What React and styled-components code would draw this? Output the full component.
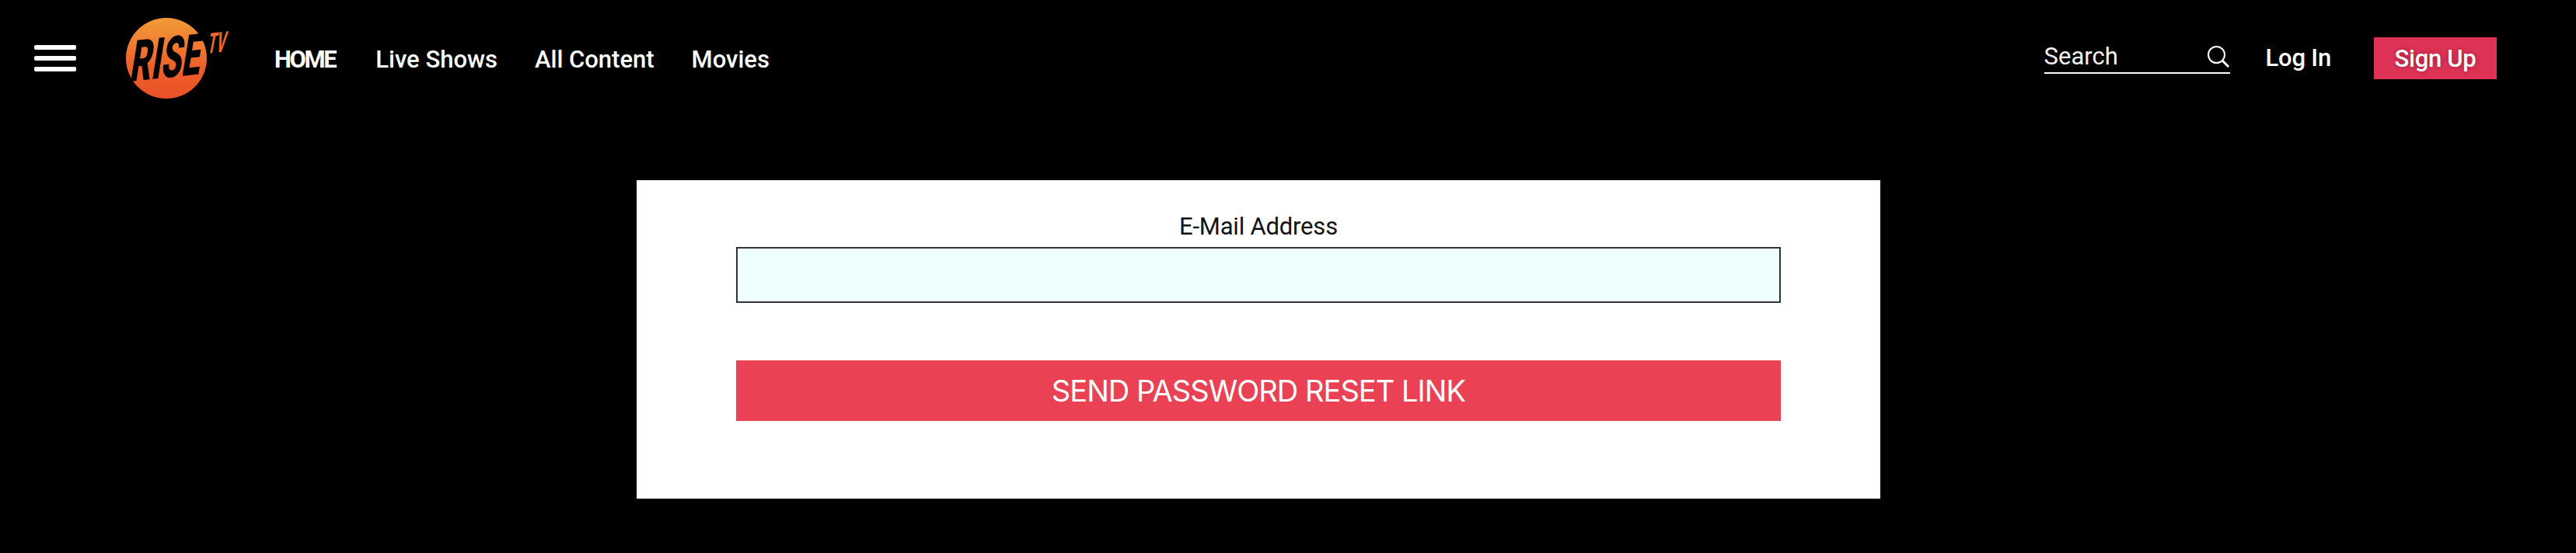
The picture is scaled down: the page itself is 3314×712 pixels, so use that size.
import React from "react";
import styled, { createGlobalStyle } from "styled-components";

const GlobalStyle = createGlobalStyle`
  html, body {
    margin: 0;
    background: #000;
  }
  body {
    font-family: Roboto, "Liberation Sans", sans-serif;
    color: #fff;
  }
`;

const Page = styled.div`
  width: 3314px;
  height: 712px;
  background: #000;
  overflow: hidden;
`;

const Header = styled.header`
  height: 150px;
  box-sizing: border-box;
  padding: 0 102px 0 44px;
  display: flex;
  align-items: center;
`;

const Burger = styled.button`
  width: 54px;
  padding: 0;
  border: 0;
  background: none;
  display: flex;
  flex-direction: column;
  gap: 8px;
  margin-right: 64px;
`;

const BurgerBar = styled.span`
  height: 6px;
  border-radius: 2px;
  background: #fff;
`;

const LogoSvg = styled.svg`
  width: 142px;
  height: 110px;
  margin-right: 49px;
  flex: none;
`;

const Nav = styled.nav`
  display: flex;
  align-items: center;
  gap: 48px;
  padding-top: 3px;
`;

const NavLink = styled.a`
  font-size: 31px;
  line-height: 40px;
  font-weight: ${(props) => (props.$active ? 700 : 500)};
  letter-spacing: ${(props) => (props.$active ? "-2.4px" : "0")};
  margin-right: ${(props) => (props.$active ? "4px" : "0")};
  color: #fff;
  white-space: nowrap;
`;

const RightSide = styled.div`
  margin-left: auto;
  display: flex;
  align-items: center;
`;

const SearchBox = styled.div`
  width: 239px;
  height: 40px;
  border-bottom: 2px solid #fff;
  display: flex;
  align-items: center;
  justify-content: space-between;
  margin: 0 46px 2px 0;
`;

const SearchLabel = styled.span`
  font-size: 31px;
  line-height: 36px;
  font-weight: 400;
  color: #f2f2f2;
  margin-bottom: 1px;
`;

const SearchIcon = styled.svg`
  width: 30px;
  height: 30px;
  fill: none;
  stroke: #fff;
  stroke-width: 2;
`;

const LogIn = styled.a`
  font-size: 31px;
  font-weight: 500;
  letter-spacing: -0.2px;
  color: #fff;
  margin: 0 55px 2px 0;
`;

const SignUp = styled.a`
  width: 158px;
  height: 54px;
  background: #de3357;
  color: #fff;
  font-size: 31px;
  font-weight: 500;
  letter-spacing: -0.3px;
  display: flex;
  align-items: center;
  justify-content: center;
  text-shadow: 0 0 6px rgba(90, 0, 20, 0.5);
`;

const Card = styled.form`
  width: 1600px;
  height: 410px;
  margin: 82px 0 0 819px;
  box-sizing: border-box;
  padding: 38px 128px 0 128px;
  background: #fff;
  display: flex;
  flex-direction: column;
`;

const Label = styled.label`
  font-size: 31px;
  line-height: 44px;
  letter-spacing: -0.2px;
  color: #111;
  text-align: center;
  margin-bottom: 4px;
`;

const EmailInput = styled.input`
  height: 72px;
  box-sizing: border-box;
  border: 2px solid #333;
  background: #efffff;
  margin: 0 0 74px;
  padding: 0 8px;
`;

const SubmitButton = styled.button`
  height: 78px;
  border: 0;
  padding: 0;
  background: #eb4155;
  color: #fff;
  font-family: Inter, "Liberation Sans", sans-serif;
  font-size: 38px;
  font-weight: 400;
  letter-spacing: -0.95px;
`;

const Logo = () => (
  <LogoSvg viewBox="0 0 142 110">
    <defs>
      <linearGradient id="riseGrad" x1="0" y1="0" x2="0" y2="1">
        <stop offset="0" stopColor="#f29b38" />
        <stop offset="0.6" stopColor="#ed6129" />
        <stop offset="1" stopColor="#ea5027" />
      </linearGradient>
    </defs>
    <circle cx="52" cy="55" r="52" fill="url(#riseGrad)" />
    <text
      transform="translate(4 85) rotate(-6) skewX(-15) scale(0.58 1)"
      fontFamily="Roboto, sans-serif"
      fontWeight="900"
      fontSize="73"
      fill="#000"
    >
      RISE
    </text>
    <text
      transform="translate(104 49) rotate(-6) skewX(-17) scale(0.5 1)"
      fontFamily="Roboto, sans-serif"
      fontWeight="700"
      fontSize="36"
      fill="#ef6a2b"
    >
      TV
    </text>
  </LogoSvg>
);

export default function App() {
  return (
    <Page>
      <GlobalStyle />
      <Header>
        <Burger type="button" aria-label="Menu">
          <BurgerBar />
          <BurgerBar />
          <BurgerBar />
        </Burger>
        <Logo />
        <Nav>
          <NavLink $active>HOME</NavLink>
          <NavLink>Live Shows</NavLink>
          <NavLink>All Content</NavLink>
          <NavLink>Movies</NavLink>
        </Nav>
        <RightSide>
          <SearchBox>
            <SearchLabel>Search</SearchLabel>
            <SearchIcon viewBox="0 0 30 30">
              <circle cx="12.5" cy="12.5" r="10.5" />
              <path d="M20 20l8 8" strokeWidth="3" />
            </SearchIcon>
          </SearchBox>
          <LogIn>Log In</LogIn>
          <SignUp>Sign Up</SignUp>
        </RightSide>
      </Header>
      <Card onSubmit={(e) => e.preventDefault()}>
        <Label htmlFor="email">E-Mail Address</Label>
        <EmailInput id="email" type="email" />
        <SubmitButton type="submit">SEND PASSWORD RESET LINK</SubmitButton>
      </Card>
    </Page>
  );
}
